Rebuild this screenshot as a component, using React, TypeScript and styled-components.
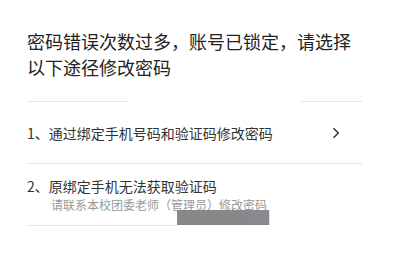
import styled, { createGlobalStyle } from 'styled-components';

const GlobalStyle = createGlobalStyle`
  html, body {
    margin: 0;
    padding: 0;
    background: #fff;
  }
  body {
    font-family: "Noto Sans CJK SC", "Noto Sans", sans-serif;
  }
`;

const Page = styled.div`
  position: relative;
  width: 393px;
  height: 260px;
  padding: 28px 31px 0 27px;
  box-sizing: border-box;
  background: #fff;
`;

const Title = styled.h1`
  margin: 0 0 21px;
  font-size: 18px;
  line-height: 26px;
  font-weight: 400;
  color: #222;
`;

const Divider = styled.div<{ gap?: boolean; length?: number }>`
  height: 1px;
  width: ${(p) => (p.length ? `${p.length}px` : '100%')};
  background: ${(p) =>
    p.gap
      ? 'linear-gradient(to right, #e5e5e5 0, #e5e5e5 101px, transparent 101px, transparent 274px, #e5e5e5 274px)'
      : '#e5e5e5'};
`;

const Option = styled.div`
  display: flex;
  align-items: center;
  justify-content: space-between;
  cursor: pointer;
`;

const OptionSingle = styled(Option)`
  height: 61px;
  border-bottom: 1px solid #e5e5e5;
`;

const OptionDouble = styled(Option)`
  padding: 12px 0 11px;
`;

const OptionBody = styled.div`
  display: flex;
  flex-direction: column;
`;

const OptionLabel = styled.div`
  font-size: 14px;
  line-height: 20px;
  color: #333;
`;

const OptionHint = styled.div`
  padding-left: 24px;
  font-size: 12px;
  line-height: 18px;
  color: #999;
`;

const Chevron = styled.svg`
  width: 8px;
  height: 12px;
  margin-right: 22px;
  flex-shrink: 0;
`;

const Shade = styled.div`
  position: absolute;
  left: 177px;
  top: 210px;
  width: 92px;
  height: 15px;
  background: linear-gradient(to right, #888 0, #888 69px, #8a8790 69px);
  box-shadow: 1px 0 0 #cfe3f5;
`;

export default function App() {
  return (
    <>
      <GlobalStyle />
      <Page>
        <Title>密码错误次数过多，账号已锁定，请选择以下途径修改密码</Title>
        <Divider gap />
        <OptionSingle>
          <OptionLabel>1、通过绑定手机号码和验证码修改密码</OptionLabel>
          <Chevron viewBox="0 0 8 12">
            <path d="M1.5 1.2 L6.3 6 L1.5 10.8" fill="none" stroke="#333" strokeWidth="1.5" />
          </Chevron>
        </OptionSingle>
        <OptionDouble>
          <OptionBody>
            <OptionLabel>2、原绑定手机无法获取验证码</OptionLabel>
            <OptionHint>请联系本校团委老师（管理员）修改密码</OptionHint>
          </OptionBody>
        </OptionDouble>
        <Divider length={150} />
        <Shade />
      </Page>
    </>
  );
}
